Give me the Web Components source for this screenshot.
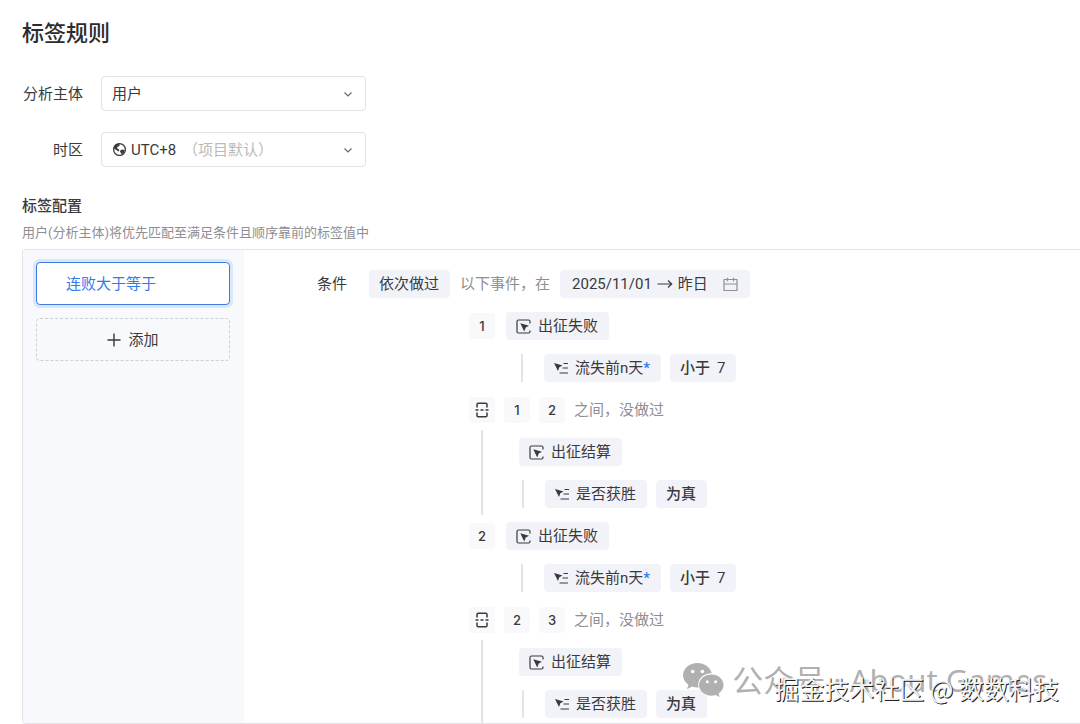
<!DOCTYPE html>
<html lang="zh-CN">
<head>
<meta charset="utf-8">
<title>标签规则</title>
<style>
    body {
        margin: 0;
        background: #fff;
        color: #3a3a3c;
        font-family: Roboto, "Noto Sans CJK SC", sans-serif;
        font-size: 15px;
        line-height: 28px;
    }
</style>
</head>
<body>
<tag-rule-page>
    <field-select label="分析主体" options="用户,设备"></field-select>
    <field-select label="时区" options="UTC+8,UTC+0">
        <ui-icon slot="icon" name="globe"></ui-icon>
        <span slot="hint">（项目默认）</span>
    </field-select>

    <tag-item slot="tags" active>连败大于等于</tag-item>
    <tag-item slot="tags" add><ui-icon name="plus"></ui-icon>添加</tag-item>

    <condition-head slot="condition">
        <chip-button slot="mode">依次做过</chip-button>
        以下事件，在
        <chip-button slot="range" wide>2025/11/01<ui-icon name="arrow"></ui-icon>昨日<ui-icon name="calendar"></ui-icon></chip-button>
    </condition-head>

    <event-step slot="steps" index="1" event="出征失败" prop="流失前n天" op="小于" value="7" required></event-step>
    <event-gap slot="steps" from="1" to="2" event="出征结算" prop="是否获胜" op="为真"></event-gap>
    <event-step slot="steps" index="2" event="出征失败" prop="流失前n天" op="小于" value="7" required></event-step>
    <event-gap slot="steps" from="2" to="3" event="出征结算" prop="是否获胜" op="为真"></event-gap>

    <water-mark slot="mark">
        <span slot="account">公众号 · About Games</span>
        掘金技术社区 @ 数数科技
    </water-mark>
</tag-rule-page>

<script>
(() => {
    const ICONS = {
        globe: [15, 15, `<circle cx="7.500" cy="7.500" r="5.900" fill="none" stroke="currentColor" stroke-width="1.300"/>
            <path fill="currentColor" d="M2 5.500 3.500 2.500l3-1L8 3 6.500 4.500 5 5l.5 1.500L7.500 8l-1 1.500L5 8.500 2 6.500zM8.500 8.200l1.500-.7 2.700.5-.7 2.500-2.500 2-.5-1.500-1-1.300z"/>`],
        chevron: [10, 10, `<path d="M1.500 3.500 5 7l3.500-3.500" fill="none" stroke="#6b6b6f" stroke-width="1.200"/>`],
        plus: [14, 14, `<path d="M7 .5v13M.5 7h13" fill="none" stroke="currentColor" stroke-width="1.400"/>`],
        arrow: [16, 12, `<path d="M.5 6h14M11 2.500 14.700 6 11 9.500" fill="none" stroke="currentColor" stroke-width="1.200"/>`],
        calendar: [15, 15, `<path d="M1 2.500h13v11H1zM1 7h13M4.500.7v3.500M10.500.7v3.500" fill="none" stroke="#8e8e93" stroke-width="1.200" stroke-linejoin="round"/>`],
        event: [15, 15, `<path d="M14 4.500V2.500Q14 1 12.500 1h-10Q1 1 1 2.500v10Q1 14 2.500 14h10Q14 14 14 12.500v-1" fill="none" stroke="currentColor" stroke-width="1.200"/>
            <path d="M4.300 4.300l8.700 2.500-3.300 1.700-1.500 4z" fill="currentColor"/>`],
        prop: [14, 14, `<path d="M0 2l8.500 2.500L5.300 6.200 4 10z" fill="currentColor"/>
            <path d="M9.500 2.500H14M8.500 7H14M5.500 12H14" fill="none" stroke="currentColor" stroke-width="1.200"/>`],
        between: [14, 16, `<path d="M2 5.500V2.500Q2 1.200 3.300 1.200h7.400Q12 1.200 12 2.500v3M2 10.500v3q0 1.300 1.300 1.300h7.400q1.300 0 1.300-1.300v-3" fill="none" stroke="currentColor" stroke-width="1.500"/>
            <path d="M.5 8h3M5.500 8h3M10.500 8h3" fill="none" stroke="currentColor" stroke-width="1.500"/>`],
        wechat: [41, 34, `<path fill="#b0b0b0" d="M14.500 0C6.500 0 0 5.500 0 12.300c0 3.900 2.100 7.200 5.400 9.500L4 26.200l5.100-2.600c1.800.5 3.400.9 5.400.9h1C13.500 17 20 10 28.800 10.300 27.500 4.500 21.500 0 14.500 0z"/>
            <path fill="#b0b0b0" d="M28.500 11.500c-7 0-12.500 4.800-12.500 10.600s5.500 10.600 12.500 10.600c1.500 0 2.900-.3 4.200-.7l4 2.100-1.100-3.600c2.900-2 5-5 5-8.400 0-5.800-5.500-10.600-12.100-10.600z"/>
            <g fill="#fff"><circle cx="9.700" cy="8.500" r="1.800"/><circle cx="19.400" cy="8.500" r="1.800"/><circle cx="24.300" cy="18.700" r="1.500"/><circle cx="32.600" cy="18.700" r="1.500"/></g>`]
    };

    class BaseElement extends HTMLElement {
        connectedCallback() {
            if (this.shadowRoot) return;
            this.attachShadow({ mode: 'open' }).innerHTML = `<style>* { box-sizing: border-box; }</style>${this.render()}`;
        }

        attr(name) {
            return this.getAttribute(name) || '';
        }
    }

    class UiIcon extends BaseElement {
        render() {
            const [width, height, body] = ICONS[this.attr('name')];
            return `
                <style>
                :host { display: inline-flex; flex: none; }
                </style>
                <svg width="${width}" height="${height}" viewBox="0 0 ${width} ${height}" aria-hidden="true">${body}</svg>
            `;
        }
    }

    class ChipButton extends BaseElement {
        render() {
            return `
                <style>
                :host { display: inline-flex; }
                button {
                    display: flex;
                    align-items: center;
                    gap: 7px;
                    height: 28px;
                    padding: 0 11px 0 10px;
                    border: 0;
                    border-radius: 4px;
                    background: #f2f3f8;
                    color: inherit;
                    font: inherit;
                    white-space: pre;
                    cursor: pointer;
                }
                button:hover { background: #e9ebf3; }
                :host([wide]) button { padding: 0 12px; gap: 5px; }
                ::slotted([name="calendar"]) { margin-left: 10px; }
                ::slotted(b) { font-weight: 500; }
                :host([square]) button {
                    justify-content: center;
                    width: 26px;
                    height: 26px;
                    padding: 0;
                    background: #f9f9fb;
                    font-family: Inter, sans-serif;
                    font-size: 13px;
                    font-weight: 500;
                }
                </style>
                <button type="button"><slot></slot></button>
            `;
        }
    }

    class FieldSelect extends BaseElement {
        render() {
            const options = this.attr('options').split(',').map(o => `<option>${o}</option>`).join('');
            const hasIcon = this.querySelector('[slot="icon"]');
            return `
                <style>
                :host { display: flex; align-items: center; gap: 18px; }
                label { width: 61px; text-align: right; white-space: nowrap; }
                .box { display: grid; align-items: center; width: 265px; }
                .box > * { grid-area: 1 / 1; }
                select {
                    appearance: none;
                    width: 100%;
                    height: 35px;
                    padding: 0 30px 0 ${hasIcon ? 29 : 10}px;
                    border: 1px solid #e2e2e5;
                    border-radius: 4px;
                    background: #fff;
                    color: inherit;
                    font: inherit;
                }
                .over { display: flex; align-items: center; padding: 0 13px 0 11px; pointer-events: none; }
                .hint { margin-left: 56px; color: #b9b9bd; }
                .chevron { margin-left: auto; }
                </style>
                <label for="control">${this.attr('label')}</label>
                <div class="box">
                    <select id="control">${options}</select>
                    <div class="over">
                        <slot name="icon"></slot>
                        <span class="hint"><slot name="hint"></slot></span>
                        <ui-icon class="chevron" name="chevron"></ui-icon>
                    </div>
                </div>
            `;
        }
    }

    class TagItem extends BaseElement {
        render() {
            return `
                <style>
                :host { display: block; }
                button {
                    display: flex;
                    align-items: center;
                    justify-content: center;
                    gap: 7px;
                    width: 100%;
                    height: 43px;
                    border: 1px dashed #cfcfd4;
                    border-radius: 4px;
                    background: transparent;
                    color: inherit;
                    font: inherit;
                    cursor: pointer;
                }
                :host([active]) button {
                    justify-content: flex-start;
                    padding: 0 29px;
                    border: 1px solid #3d7be0;
                    background: #fff;
                    box-shadow: 0 0 0 3px #d8e7fb;
                    color: #2f7bea;
                }
                </style>
                <button type="button"><slot></slot></button>
            `;
        }
    }

    class ConditionHead extends BaseElement {
        render() {
            return `
                <style>
                :host { display: flex; align-items: center; white-space: nowrap; }
                .label { width: 52px; }
                .text { margin: 0 10px; color: #8e8e93; }
                </style>
                <span class="label">条件</span>
                <slot name="mode"></slot>
                <span class="text"><slot></slot></span>
                <slot name="range"></slot>
            `;
        }
    }

    // event chip with its property filter below
    class EventFilter extends BaseElement {
        render() {
            const star = this.hasAttribute('required') ? '<span class="star">*</span>' : '';
            const value = this.attr('value') ? `<span>${this.attr('value')}</span>` : '';
            return `
                <style>
                :host { display: grid; gap: 14px; justify-items: start; }
                .filter {
                    display: flex;
                    gap: 9px;
                    margin-left: var(--filter-indent, 15px);
                    padding-left: 21px;
                    border-left: 2px solid #e4e4e8;
                }
                .star { color: #2f7bea; font-weight: 500; }
                </style>
                <chip-button><ui-icon name="event"></ui-icon>${this.attr('event')}</chip-button>
                <div class="filter">
                    <chip-button><ui-icon name="prop"></ui-icon><span>${this.attr('prop')}${star}</span></chip-button>
                    <chip-button><b>${this.attr('op')}</b>${value}</chip-button>
                </div>
            `;
        }
    }

    class EventBlock extends BaseElement {
        filter() {
            const names = ['event', 'prop', 'op', 'value', 'required'].filter(n => this.hasAttribute(n));
            return `<event-filter ${names.map(n => `${n}="${this.attr(n)}"`).join(' ')}></event-filter>`;
        }
    }

    class EventStep extends EventBlock {
        render() {
            return `
                <style>
                :host { display: flex; gap: 11px; }
                .index {
                    width: 26px;
                    height: 26px;
                    margin-top: 1px;
                    border-radius: 4px;
                    background: #f9f9fb;
                    font: 500 13px/26px Inter, sans-serif;
                    text-align: center;
                }
                </style>
                <span class="index">${this.attr('index')}</span>
                ${this.filter()}
            `;
        }
    }

    class EventGap extends EventBlock {
        render() {
            return `
                <style>
                :host { display: grid; gap: 14px; }
                .row { display: flex; align-items: center; gap: 9px; height: 28px; }
                .text { color: #8e8e93; }
                .body {
                    --filter-indent: 3px;
                    margin: -8px 0 -7px 12px;
                    padding: 8px 0 7px 36px;
                    border-left: 2px solid #e4e4e8;
                }
                </style>
                <div class="row">
                    <chip-button square><ui-icon name="between"></ui-icon></chip-button>
                    <chip-button square>${this.attr('from')}</chip-button>
                    <chip-button square>${this.attr('to')}</chip-button>
                    <span class="text">之间，没做过</span>
                </div>
                <div class="body">${this.filter()}</div>
            `;
        }
    }

    class WaterMark extends BaseElement {
        render() {
            return `
                <style>
                :host {
                    position: absolute;
                    right: 21px;
                    bottom: 18px;
                    display: grid;
                    justify-items: end;
                    white-space: nowrap;
                    pointer-events: none;
                }
                .account {
                    display: flex;
                    align-items: center;
                    gap: 8px;
                    margin-right: 12px;
                    color: rgba(150, 150, 150, .75);
                    font-family: "Noto Sans", "Noto Sans CJK SC", sans-serif;
                    font-size: 31px;
                    line-height: 36px;
                }
                .site {
                    margin-top: -28px;
                    color: #f2f2f2;
                    font-family: "Noto Sans CJK SC", sans-serif;
                    font-size: 25px;
                    line-height: 36px;
                    text-shadow: 1px 1px 0 #222;
                }
                </style>
                <div class="account"><ui-icon name="wechat"></ui-icon><slot name="account"></slot></div>
                <div class="site"><slot></slot></div>
            `;
        }
    }

    class TagRulePage extends BaseElement {
        render() {
            return `
                <style>
                :host { display: block; position: relative; padding: 18px 0 0 22px; overflow: hidden; }
                h1 { margin: 0 0 26px; color: #2c2c2e; font-size: 22px; font-weight: 500; line-height: 32px; }
                .fields { display: grid; gap: 21px; }
                h2 { margin: 25px 0 0; font-size: 15px; font-weight: 500; }
                p { margin: 3px 0 6px; color: #8e8e93; font-size: 13px; line-height: 20px; }
                .panel {
                    display: grid;
                    grid-template-columns: 221px 1fr;
                    border: 1px solid #e4e4e8;
                    border-right: 0;
                    border-radius: 4px 0 0 4px;
                    overflow: hidden;
                }
                aside {
                    display: grid;
                    align-content: start;
                    gap: 13px;
                    padding: 12px 14px 12px 13px;
                    background: #f8f9fc;
                }
                main { padding: 20px 0 5px 73px; }
                .steps { display: grid; gap: 14px; margin: 14px 0 0 152px; }
                </style>
                <h1>标签规则</h1>
                <div class="fields"><slot></slot></div>
                <h2>标签配置</h2>
                <p>用户(分析主体)将优先匹配至满足条件且顺序靠前的标签值中</p>
                <div class="panel">
                    <aside><slot name="tags"></slot></aside>
                    <main>
                        <slot name="condition"></slot>
                        <div class="steps"><slot name="steps"></slot></div>
                    </main>
                </div>
                <slot name="mark"></slot>
            `;
        }
    }

    customElements.define('ui-icon', UiIcon);
    customElements.define('chip-button', ChipButton);
    customElements.define('field-select', FieldSelect);
    customElements.define('tag-item', TagItem);
    customElements.define('condition-head', ConditionHead);
    customElements.define('event-filter', EventFilter);
    customElements.define('event-step', EventStep);
    customElements.define('event-gap', EventGap);
    customElements.define('water-mark', WaterMark);
    customElements.define('tag-rule-page', TagRulePage);
})();
</script>
</body>
</html>
